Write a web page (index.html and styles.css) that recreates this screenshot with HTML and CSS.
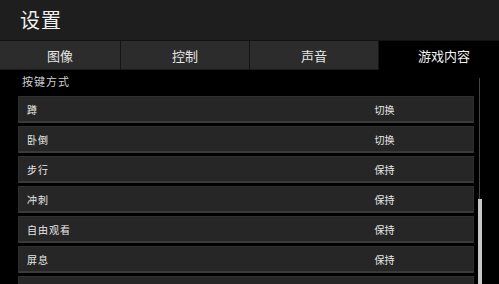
FILE: index.html
```html
<!DOCTYPE html>
<html lang="zh">
<head>
    <meta charset="UTF-8">
    <title>设置</title>
    <link rel="stylesheet" href="styles.css">
</head>
<body>
    <header class="top-bar">
        <h1>设置</h1>
    </header>

    <nav class="tabs">
        <div class="tab">图像</div>
        <div class="tab">控制</div>
        <div class="tab">声音</div>
        <div class="tab active">游戏内容</div>
    </nav>

    <main class="content">
        <section class="list">
            <div class="section-label">按键方式</div>
            <div class="row"><span class="name">蹲</span><span class="value">切换</span></div>
            <div class="row"><span class="name">卧倒</span><span class="value">切换</span></div>
            <div class="row"><span class="name">步行</span><span class="value">保持</span></div>
            <div class="row"><span class="name">冲刺</span><span class="value">保持</span></div>
            <div class="row"><span class="name">自由观看</span><span class="value">保持</span></div>
            <div class="row"><span class="name">屏息</span><span class="value">保持</span></div>
            <div class="row"><span class="name"></span><span class="value"></span></div>
        </section>
        <div class="scroll-track">
            <div class="scroll-thumb"></div>
        </div>
    </main>
</body>
</html>
```

FILE: styles.css
```css
/* Common styles */
body {
    margin: 0;
    padding: 0;
    background-color: #000;
    color: #eee;
    font-family: "Noto Sans CJK SC", "Noto Sans", sans-serif;
    height: 284px;
    overflow: hidden;
}

/* Title bar */
.top-bar {
    height: 38px;
    background-color: #1e1e1e;
    border-bottom: 1px solid #111;
    padding-left: 20px;
    padding-bottom: 2px;
    display: flex;
    align-items: center;
}

.top-bar h1 {
    margin: 0;
    font-size: 20px;
    font-weight: normal;
    color: #f0f0f0;
    letter-spacing: 1px;
}

/* Tabs */
.tabs {
    display: flex;
    height: 29px;
}

.tab {
    width: 128px;
    background-color: #2c2c2c;
    border-right: 1px solid #141414;
    border-bottom: 1px solid #1a1a1a;
    display: flex;
    align-items: center;
    justify-content: center;
    font-size: 13px;
    color: #e6e6e6;
}

.tab:first-child {
    width: 120px;
}

.tab.active {
    flex: 1;
    background-color: #000;
    border: none;
    color: #f2f2f2;
    padding-left: 10px;
}

/* Content */
.content {
    display: flex;
    height: 214px;
    overflow: hidden;
}

.list {
    width: 456px;
    margin-left: 18px;
    display: flex;
    flex-direction: column;
    gap: 3px;
}

.section-label {
    flex-shrink: 0;
    height: 23px;
    margin-left: 4px;
    font-size: 11px;
    color: #cfcfcf;
    letter-spacing: 1px;
    line-height: 22px;
}

.row {
    flex-shrink: 0;
    height: 24px;
    background-color: #262626;
    border: 1px solid #2f2f2f;
    border-bottom: 2px solid #3a3a3a;
    display: flex;
    align-items: center;
    font-size: 10px;
    color: #e8e8e8;
}

.row .name {
    width: 340px;
    padding-left: 8px;
    letter-spacing: 1px;
}

.row .value {
    width: 35px;
    text-align: center;
}

/* Scrollbar */
.scroll-track {
    width: 5px;
    margin-left: 3px;
    margin-top: 8px;
    display: flex;
    justify-content: center;
    background: linear-gradient(#444, #444) center / 1px 100% no-repeat;
}

.scroll-thumb {
    width: 4px;
    height: 90px;
    margin-top: 121px;
    background-color: #c8c8c8;
}
```
